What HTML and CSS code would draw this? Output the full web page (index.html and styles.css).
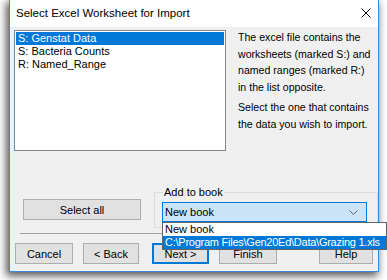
FILE: index.html
```html
<!DOCTYPE html>
<html>
<head>
<meta charset="utf-8">
<title>Select Excel Worksheet for Import</title>
<link rel="stylesheet" href="styles.css">
</head>
<body>
<div class="window">
  <div class="titlebar">
    <span class="title">Select Excel Worksheet for Import</span>
    <svg class="close" width="10" height="10" viewBox="0 0 10 10"><path d="M0.5 0.5 L9.5 9.5 M9.5 0.5 L0.5 9.5" stroke="#000" stroke-width="1" fill="none"/></svg>
  </div>
  <div class="content">
    <div class="top">
      <div class="listbox">
        <div class="item selected">S: Genstat Data</div>
        <div class="item">S: Bacteria Counts</div>
        <div class="item">R: Named_Range</div>
      </div>
      <div class="desc">
        <p>The excel file contains the<br>worksheets (marked S:) and<br>named ranges (marked R:)<br>in the list opposite.</p>
        <p>Select the one that contains<br>the data you wish to import.</p>
      </div>
    </div>
    <div class="mid">
      <button class="btn selectall">Select all</button>
      <fieldset class="group">
        <legend>Add to book</legend>
        <div class="combo">
          <span class="combo-text">New book</span>
          <svg class="chevron" width="9" height="5" viewBox="0 0 9 5"><path d="M0.5 0.5 L4.5 4.5 L8.5 0.5" stroke="#606060" stroke-width="1" fill="none"/></svg>
          <div class="dropdown">
            <div class="opt">New book</div>
            <div class="opt active">C:\Program Files\Gen20Ed\Data\Grazing 1.xls</div>
          </div>
        </div>
      </fieldset>
    </div>
    <div class="sep"></div>
    <div class="buttons">
      <button class="btn b-cancel">Cancel</button>
      <button class="btn b-back">&lt; Back</button>
      <button class="btn b-next">Next &gt;</button>
      <button class="btn b-finish">Finish</button>
      <button class="btn b-help">Help</button>
    </div>
  </div>
</div>
</body>
</html>
```

FILE: styles.css
```css
html, body {
  margin: 0;
  padding: 0;
  background: #ffffff;
  overflow: hidden;
}
body {
  width: 387px;
  height: 280px;
  font-family: "Liberation Sans", Arial, sans-serif;
  font-size: 11px;
  color: #000;
}
.window {
  margin-left: 9px;
  width: 370px;
  height: 272px;
  box-sizing: border-box;
  border: 1px solid #3b8ad6;
  border-top: none;
  background: #f0f0f0;
  box-shadow: -2px 3px 8px 1px rgba(0, 0, 0, 0.65);
  display: flex;
  flex-direction: column;
}
.titlebar {
  height: 27px;
  background: #ffffff;
  display: flex;
  align-items: center;
  padding: 0 6px 1px 6px;
  box-sizing: border-box;
}
.title {
  flex: 1;
  font-size: 11.5px;
}
.close {
  margin-right: 1px;
}
.content {
  padding: 3px 0 0 4px;
  display: flex;
  flex-direction: column;
}
.top {
  display: flex;
  gap: 12px;
}
.listbox {
  width: 212px;
  height: 121px;
  box-sizing: border-box;
  border: 1px solid #828790;
  background: #fff;
  padding: 1px;
}
.item {
  height: 13px;
  line-height: 13px;
  padding-left: 2px;
  white-space: nowrap;
}
.item.selected {
  background: #0078d7;
  color: #fff;
}
.desc {
  margin-top: -1px;
  line-height: 16.5px;
  font-size: 10.6px;
  white-space: nowrap;
}
.desc p {
  margin: 0 0 4px 0;
}
.mid {
  margin-top: 35px;
  display: flex;
  align-items: flex-start;
}
.btn {
  font-family: "Liberation Sans", Arial, sans-serif;
  font-size: 11px;
  color: #000;
  background: #e1e1e1;
  border: 1px solid #adadad;
  height: 21px;
  padding: 0;
  box-sizing: border-box;
  margin: 0;
}
.selectall {
  margin-left: 9px;
  margin-top: 13px;
  width: 118px;
}
.group {
  margin: 0 0 0 13px;
  width: 224px;
  box-sizing: border-box;
  border: 1px solid #dcdcdc;
  padding: 3px 10px 5px 7px;
  min-width: 0;
}
.group legend {
  padding: 0 1px;
  margin-left: 1px;
  line-height: 13px;
  font-size: 11px;
}
.combo {
  position: relative;
  height: 20px;
  box-sizing: border-box;
  border: 1px solid #0078d7;
  background: #cce4f7;
  display: flex;
  align-items: center;
  padding: 0 8px 0 2px;
}
.combo-text {
  flex: 1;
}
.dropdown {
  position: absolute;
  top: 19px;
  left: -1px;
  width: 225px;
  box-sizing: border-box;
  border: 1px solid #646464;
  background: #fff;
  z-index: 5;
}
.opt {
  height: 13px;
  line-height: 13px;
  padding-left: 2px;
  white-space: nowrap;
  overflow: hidden;
}
.opt.active {
  background: #0078d7;
  color: #fff;
  letter-spacing: -0.25px;
}
.sep {
  margin: 5px 6px 0 6px;
  height: 1px;
  background: #a0a0a0;
}
.buttons {
  margin-top: 9px;
  display: flex;
  margin-left: 1px;
}
.b-cancel { width: 58px; }
.b-back { width: 56px; margin-left: 10px; }
.b-next { width: 57px; margin-left: 13px; border: 2px solid #0078d7; }
.b-finish { width: 58px; margin-left: 10px; }
.b-help { width: 54px; margin-left: 42px; }
```
